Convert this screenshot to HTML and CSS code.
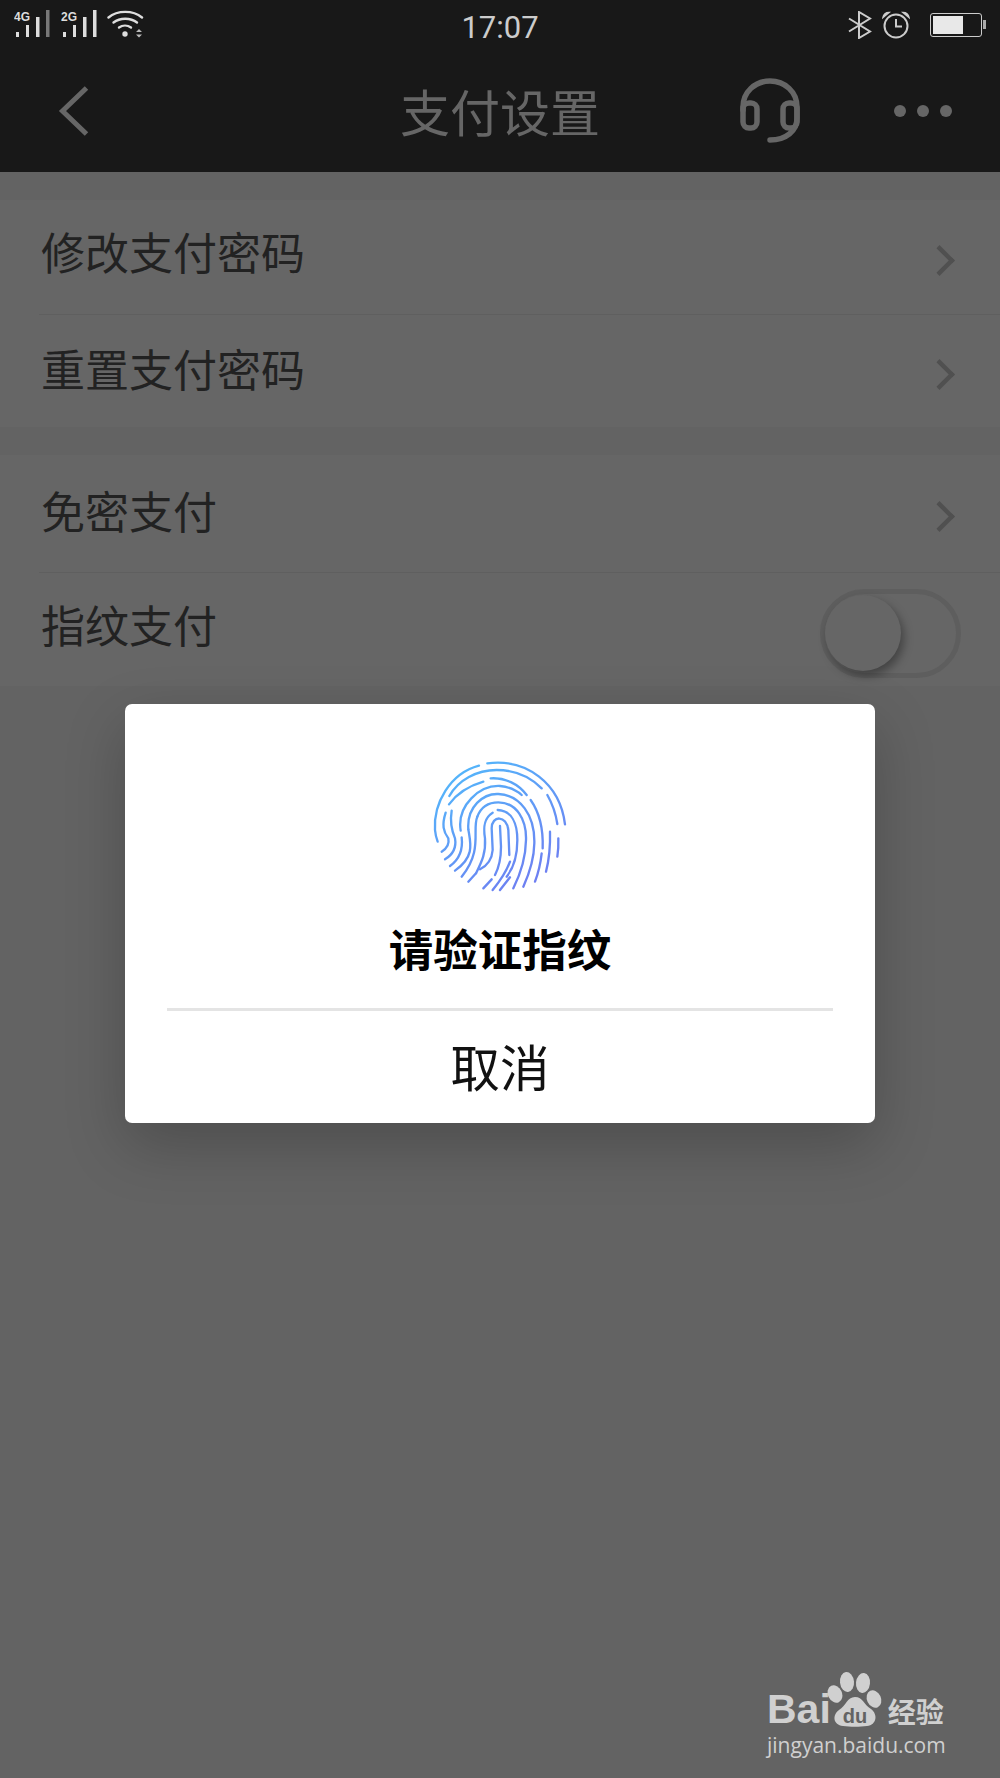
FILE: index.html
```html
<!DOCTYPE html>
<html lang="zh-CN">
  <head>
    <title>支付设置</title>
    <meta charset="UTF-8" />
    <link rel="stylesheet" href="styles.css">
  </head>
  <body>
    <div class="phone">
      <div class="topbar">
        <div class="status-row">
          <div class="status-left">
            <svg class="signal" width="38" height="30" viewBox="0 0 38 30">
              <text class="net" x="0" y="11">4G</text>
              <rect x="2" y="22" width="3" height="5"/>
              <rect x="12" y="15" width="3" height="12"/>
              <rect x="22" y="7" width="3.5" height="20"/>
              <rect class="off" x="32" y="0" width="3.5" height="27"/>
            </svg>
            <svg class="signal" width="38" height="30" viewBox="0 0 38 30">
              <text class="net" x="0" y="11">2G</text>
              <rect x="2" y="22" width="3" height="5"/>
              <rect x="12" y="15" width="3" height="12"/>
              <rect x="22" y="7" width="3.5" height="20"/>
              <rect x="32" y="0" width="3.5" height="27"/>
            </svg>
            <svg class="wifi" width="38" height="30" viewBox="0 0 38 30">
              <g fill="none" stroke="#ddd" stroke-width="2.4" stroke-linecap="round">
                <path d="M1.5 7.5C10.5 0 26 0 35 7.5"/>
                <path d="M6.5 12.5C13 7.5 23.500 7.500 30 12.500"/>
                <path d="M12 17.500C15.500 15 20.500 15 24 17.500"/>
              </g>
              <circle cx="18" cy="24" r="2.700" fill="#ddd"/>
              <path d="M29 22h6l-3-3zM29 24.500h6l-3 3z" fill="#bbb"/>
            </svg>
          </div>
          <div class="time">17:07</div>
          <div class="status-right">
            <svg width="26" height="28" viewBox="0 0 26 28">
              <path d="M2 7.500L23 20.500L12 27V1L23 7.500L2 20.500" fill="none" stroke="#ccc" stroke-width="2"/>
            </svg>
            <svg class="alarm" width="28" height="28" viewBox="0 0 28 28">
              <circle cx="14" cy="15" r="11.500" fill="none" stroke="#ccc" stroke-width="2"/>
              <path d="M14 8v7.500h6" fill="none" stroke="#ccc" stroke-width="2"/>
              <path d="M1 6.500Q2 1.500 7 1.500ZM27 6.500Q26 1.500 21 1.500Z" fill="#ccc" stroke="#ccc" stroke-width="1.500"/>
            </svg>
            <div class="battery"><div class="battery-fill"></div></div>
          </div>
        </div>
        <div class="nav-row">
          <div class="nav-left">
            <svg width="32" height="52" viewBox="0 0 32 52">
              <path d="M28.500 3L4.500 26L28.500 49" fill="none" stroke="#666" stroke-width="5"/>
            </svg>
          </div>
          <div class="nav-title">支付设置</div>
          <div class="nav-right">
            <svg width="62" height="66" viewBox="0 0 62 66">
              <g fill="none" stroke="#666" stroke-width="5.500" stroke-linecap="round">
                <path d="M3 32V29C3 14 15 3 30 3S57 14 57 29V40C57 53 46 62 30 62"/>
                <rect x="3" y="25" width="14" height="25" rx="6"/>
                <rect x="43" y="25" width="14" height="25" rx="6"/>
              </g>
            </svg>
            <div class="dots"><span></span><span></span><span></span></div>
          </div>
        </div>
      </div>

      <div class="group">
        <div class="row row-a"><span class="row-label">修改支付密码</span><i class="chevron"></i></div>
        <div class="row row-b"><span class="row-label">重置支付密码</span><i class="chevron"></i></div>
      </div>
      <div class="group">
        <div class="row row-c"><span class="row-label">免密支付</span><i class="chevron"></i></div>
        <div class="row row-d"><span class="row-label">指纹支付</span><div class="toggle"><div class="knob"></div></div></div>
      </div>

      <div class="dialog">
        <svg class="print" width="200" height="160" viewBox="0 0 600 480">
          <defs>
            <linearGradient id="fp" gradientUnits="userSpaceOnUse" x1="160" y1="70" x2="400" y2="450">
              <stop offset="0" stop-color="#52b9fb"/>
              <stop offset="1" stop-color="#6f7cf1"/>
            </linearGradient>
          </defs>
          <g fill="none" stroke="url(#fp)" stroke-width="7" stroke-linecap="round">
            <path d="M262 70C380 55 480 130 495 253"/>
            <path d="M237 77C150 100 100 190 105 270Q107 290 113 305"/>
            <path d="M425 145C385 105 340 90 290 90C230 90 175 120 148 168"/>
            <path d="M442 165Q465 205 472 252"/>
            <path d="M272 115C315 112 355 132 380 165"/>
            <path d="M250 125C205 138 170 162 147 193"/>
            <path d="M137 218C125 255 130 275 145 295Q150 320 125 335"/>
            <path d="M155 212Q148 255 165 295Q172 335 135 358"/>
            <path d="M182 272C170 195 240 135 300 138Q340 142 365 165"/>
            <path d="M185 292C190 335 175 360 150 378"/>
            <path d="M392 180C420 220 430 270 428 325"/>
            <path d="M205 268C200 200 250 160 295 162C360 165 405 225 403 310Q402 370 370 440"/>
            <path d="M205 268C212 310 225 350 165 392"/>
            <path d="M232 230C245 195 270 187 295 187C350 187 380 240 378 300Q377 370 340 445"/>
            <path d="M232 230C215 270 250 330 185 410"/>
            <path d="M293 210C335 212 352 250 352 300Q352 370 320 410"/>
            <path d="M278 218C250 235 250 265 255 295C258 340 245 365 228 400"/>
            <path d="M328 345L325 270C320 225 275 225 275 265L278 330Q275 370 240 388"/>
            <path d="M300 258L303 320Q303 370 285 405"/>
            <path d="M330 365Q315 405 278 450"/>
            <path d="M330 412L300 450"/>
            <path d="M275 418L250 445"/>
            <path d="M228 400L205 425"/>
            <path d="M425 340Q420 385 405 425"/>
            <path d="M450 275Q452 340 438 395"/>
            <path d="M475 295Q476 325 472 350"/>
          </g>
        </svg>
        <div class="dialog-title">请验证指纹</div>
        <div class="dialog-line"></div>
        <div class="dialog-btn">取消</div>
      </div>

      <div class="watermark">
        <div class="wm-top">
          <span class="wm-bai">Bai</span>
          <svg class="wm-paw" width="62" height="62" viewBox="0 0 62 62">
            <ellipse cx="21" cy="11" rx="7" ry="10" fill="#d0d0d0" transform="rotate(-6 21 11)"/>
            <ellipse cx="37" cy="12" rx="7" ry="10" fill="#d0d0d0" transform="rotate(6 37 12)"/>
            <ellipse cx="9" cy="23" rx="7" ry="9" fill="#d0d0d0" transform="rotate(-25 9 23)"/>
            <ellipse cx="48" cy="28" rx="7" ry="9" fill="#d0d0d0" transform="rotate(-25 48 28)"/>
            <path d="M29 26C37 26 38 34 45 38C52 43 51 54 41 55C34 56 24 56 17 55C7 54 6 44 13 39C20 35 21 26 29 26Z" fill="#d0d0d0"/>
            <text class="wm-du" x="29" y="52">du</text>
          </svg>
          <span class="wm-cn">经验</span>
        </div>
        <div class="wm-url">jingyan.baidu.com</div>
      </div>
    </div>
  </body>
</html>
```

FILE: styles.css
```css
* {
  box-sizing: border-box;
}

body {
  margin: 0;
  font-family: "Noto Sans CJK SC", "Noto Sans", sans-serif;
}

.phone {
  position: relative;
  width: 1000px;
  height: 1778px;
  overflow: hidden;
  background-color: #636363;
}

/* top bar */
.topbar {
  height: 172px;
  background-color: #181818;
}

.status-row {
  display: grid;
  grid-template-columns: 1fr auto 1fr;
  align-items: center;
  height: 50px;
}

.status-left {
  display: flex;
  align-items: flex-start;
  gap: 9px;
  padding-left: 14px;
}

.signal rect {
  fill: #ddd;
}

.signal .off {
  fill: #777;
}

.signal .net {
  font-family: "Liberation Sans", sans-serif;
  font-size: 12px;
  font-weight: 700;
  fill: #ddd;
}

.wifi {
  margin-left: -1px;
}

.time {
  margin-top: 4px;
  font-family: Roboto, sans-serif;
  font-size: 31px;
  font-weight: 400;
  color: #ccc;
}

.status-right {
  display: flex;
  justify-content: flex-end;
  align-items: center;
  padding-right: 18px;
}

.alarm {
  margin-left: 9px;
}

.battery {
  position: relative;
  width: 52px;
  height: 24px;
  margin-left: 20px;
  padding: 2px;
  border: 1px solid #ccc;
  border-radius: 3px;
}

.battery::after {
  content: " ";
  position: absolute;
  right: -5px;
  top: 6px;
  width: 3px;
  height: 9px;
  background-color: #aaa;
}

.battery-fill {
  width: 30px;
  height: 100%;
  background-color: #e8e8e8;
}

.nav-row {
  display: grid;
  grid-template-columns: 1fr auto 1fr;
  align-items: center;
  height: 122px;
}

.nav-left {
  display: flex;
  padding-left: 58px;
}

.nav-title {
  font-size: 50px;
  line-height: 60px;
  color: #666;
  margin-top: -2px;
}

.nav-right {
  display: flex;
  justify-content: flex-end;
  align-items: center;
  gap: 92px;
  padding-right: 48px;
}

.dots {
  display: flex;
  gap: 11px;
}

.dots span {
  width: 12px;
  height: 12px;
  border-radius: 50%;
  background-color: #666;
}

/* settings rows */
.group {
  margin-top: 28px;
  background-color: #666;
}

.row {
  display: flex;
  justify-content: space-between;
  align-items: center;
  margin-left: 39px;
  padding: 0 53px 0 2px;
  font-size: 44px;
  color: #222;
  border-top: 1px solid #5f5f5f;
}

.row-a,
.row-c {
  border-top: 0;
}

.row-a {
  height: 114px;
}

.row-b {
  height: 113px;
}

.row-c {
  height: 117px;
}

.row-d {
  height: 114px;
  padding-right: 39px;
}

.row-a .row-label,
.row-d .row-label {
  margin-top: -12px;
}

.row-b .row-label,
.row-c .row-label {
  margin-top: -7px;
}

.chevron {
  width: 15px;
  height: 15px;
  margin-top: 6px;
  border-top: 3px solid #505050;
  border-right: 3px solid #505050;
  transform: rotate(45deg) scale(1.45);
}

.toggle {
  position: relative;
  width: 141px;
  height: 89px;
  margin-top: 8px;
  border: 5px solid #5e5e5e;
  border-radius: 45px;
}

.knob {
  position: absolute;
  left: 0;
  top: 1px;
  width: 76px;
  height: 76px;
  border-radius: 50%;
  background-color: #666;
  box-shadow: 3px 5px 10px rgba(0, 0, 0, 0.35);
}

/* fingerprint dialog */
.dialog {
  position: absolute;
  left: 125px;
  top: 704px;
  display: flex;
  flex-direction: column;
  align-items: center;
  width: 750px;
  height: 419px;
  padding-top: 36px;
  background-color: white;
  border-radius: 7px;
  box-shadow: 0 22px 60px rgba(0, 0, 0, 0.22);
}

.dialog-title {
  margin-top: 20px;
  font-size: 44.5px;
  font-weight: 700;
  line-height: 56px;
  color: black;
}

.dialog-line {
  width: 666px;
  height: 3px;
  margin-top: 32px;
  background-color: #e4e4e4;
}

.dialog-btn {
  margin-top: 23px;
  font-size: 49.5px;
  line-height: 64px;
  color: #111;
}

/* watermark */
.watermark {
  position: absolute;
  left: 767px;
  top: 1675px;
  width: 180px;
  color: #d0d0d0;
}

.wm-top {
  display: flex;
  align-items: flex-end;
  height: 56px;
}

.wm-bai {
  margin-bottom: -2px;
  font-family: "Liberation Sans", sans-serif;
  font-size: 41px;
  font-weight: 700;
  line-height: 48px;
}

.wm-paw {
  flex: none;
  margin-left: -5px;
  margin-bottom: -2px;
}

.wm-du {
  font-family: "Liberation Sans", sans-serif;
  font-size: 20px;
  font-weight: 700;
  text-anchor: middle;
  fill: #636363;
}

.wm-cn {
  margin-left: 0;
  font-size: 28px;
  font-weight: 700;
  line-height: 40px;
}

.wm-url {
  font-family: "Open Sans", sans-serif;
  font-size: 21px;
  line-height: 28px;
  white-space: nowrap;
}
```
